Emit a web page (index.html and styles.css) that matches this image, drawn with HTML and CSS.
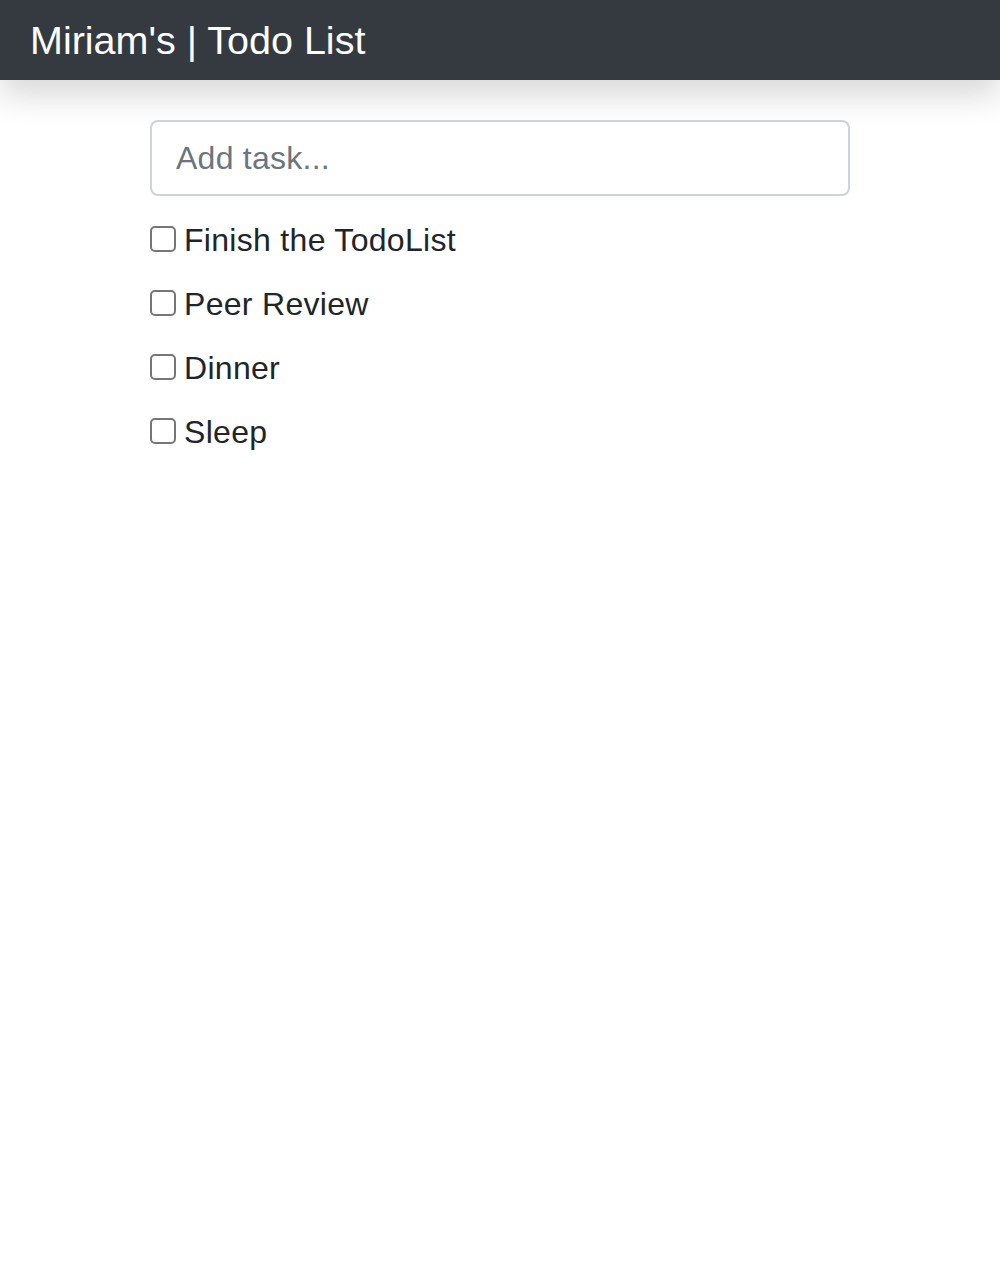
FILE: index.html
```html
<!DOCTYPE html>
<html lang="en">
<head>
<meta charset="utf-8">
<title>Miriam's | Todo List</title>
<link rel="stylesheet" href="styles.css">
</head>
<body>
<nav class="navbar">
  <span class="brand">Miriam's | Todo List</span>
</nav>
<main class="container">
  <input class="task-input" type="text" placeholder="Add task...">
  <ul class="tasks">
    <li class="task"><input class="check" type="checkbox"><span class="label">Finish the TodoList</span></li>
    <li class="task"><input class="check" type="checkbox"><span class="label">Peer Review</span></li>
    <li class="task"><input class="check" type="checkbox"><span class="label">Dinner</span></li>
    <li class="task"><input class="check" type="checkbox"><span class="label">Sleep</span></li>
  </ul>
</main>
</body>
</html>
```

FILE: styles.css
```css
* { box-sizing: border-box; }
html, body {
  margin: 0;
  padding: 0;
  background: #fff;
  font-family: "Liberation Sans", Arial, sans-serif;
  color: #212529;
}
.navbar {
  height: 80px;
  background: #343a40;
  display: flex;
  align-items: center;
  padding: 0 30px;
  box-shadow: 0 16px 32px rgba(0, 0, 0, 0.15);
  position: relative;
  z-index: 1;
}
.brand {
  color: #fff;
  font-size: 39.5px;
  line-height: 60px;
}
.container {
  width: 700px;
  margin: 40px auto 0;
}
.task-input {
  display: block;
  width: 100%;
  height: 76px;
  border: 2px solid #ced4da;
  border-radius: 8px;
  padding: 12px 24px;
  font-family: inherit;
  font-size: 32px;
  line-height: 48px;
  letter-spacing: 0.25px;
  color: #495057;
  outline: none;
}
.task-input::placeholder { color: #6c757d; opacity: 1; }
.tasks {
  list-style: none;
  margin: 20px 0 0;
  padding: 0;
  display: flex;
  flex-direction: column;
  gap: 16px;
}
.task {
  display: flex;
  align-items: center;
  height: 48px;
  font-size: 32px;
  line-height: 48px;
  letter-spacing: 0.3px;
}
.check {
  appearance: none;
  -webkit-appearance: none;
  margin: 0 8px 0 0;
  width: 26px;
  height: 26px;
  border: 2px solid #767676;
  border-radius: 5px;
  background: #fff;
  flex: none;
  position: relative;
  top: -1px;
}
```
